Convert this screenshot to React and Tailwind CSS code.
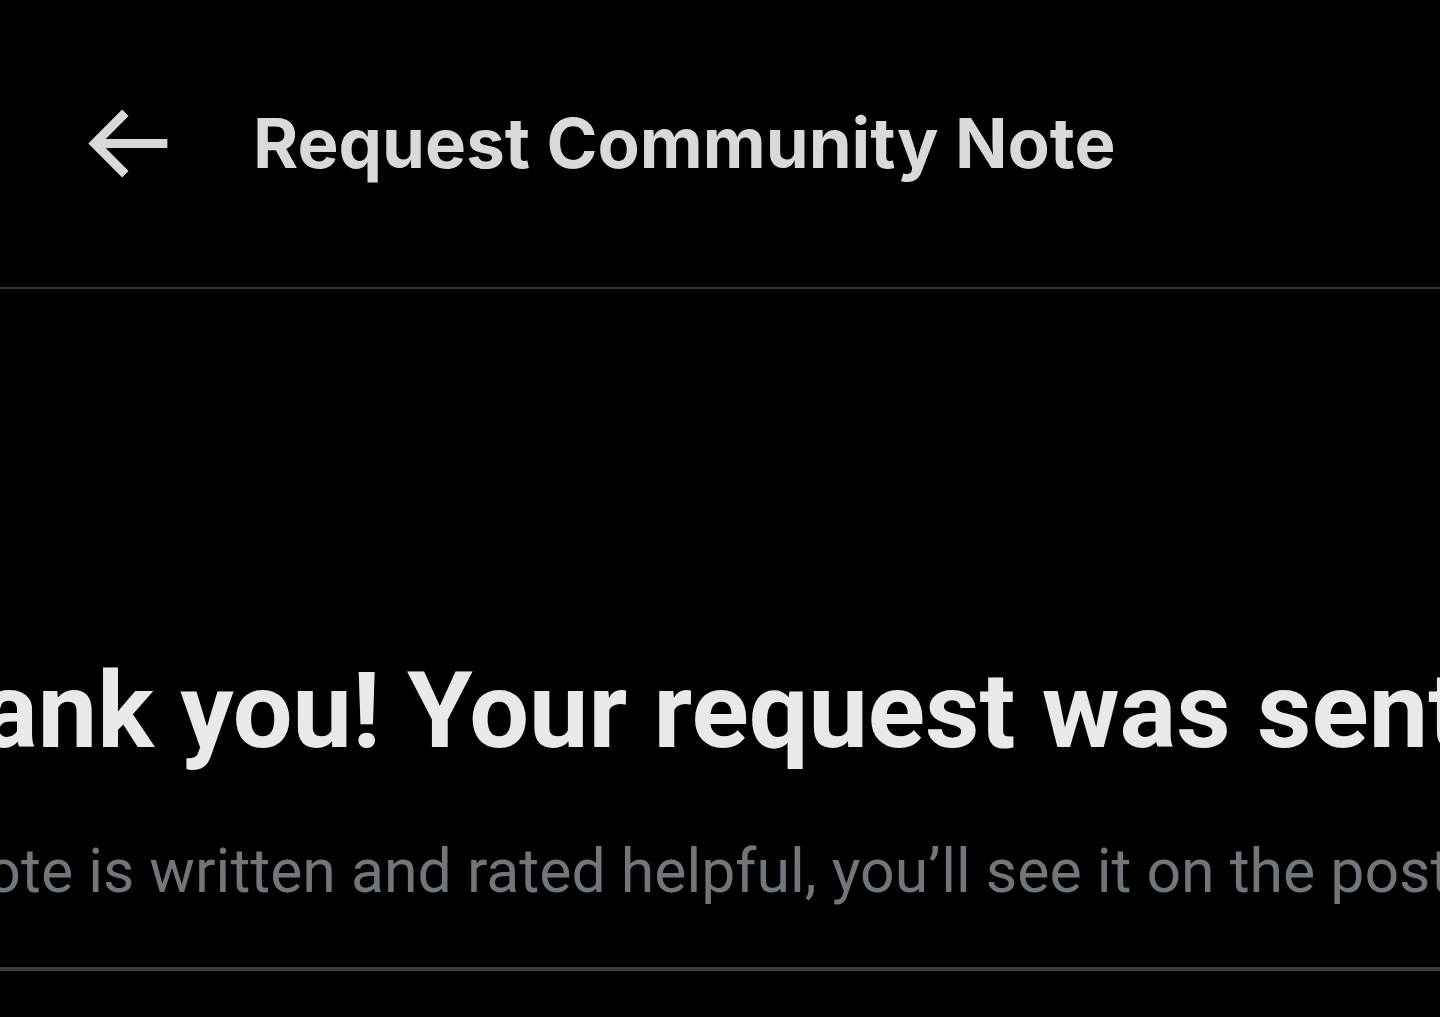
function BackArrow() {
  return (
    <svg viewBox="0 0 24 24" className="w-[109px] h-[109px] shrink-0 fill-[#d9d9d9]">
      <path d="M7.414 13l5.043 5.04-1.414 1.42L3.586 12l7.457-7.46 1.414 1.42L7.414 11H21v2H7.414z" />
    </svg>
  );
}

export default function App() {
  return (
    <div className="min-h-screen bg-black overflow-hidden font-['Roboto',sans-serif]">
      {/* Header */}
      <header className="h-[289px] flex items-center pl-[72px] border-b-2 border-[#2f3336]">
        <BackArrow />
        <h1 className="ml-[72px] text-[69px] leading-[1.2] font-bold text-[#d9d9d9] font-['Inter',sans-serif]">
          Request Community Note
        </h1>
      </header>

      {/* Confirmation */}
      <main className="pt-[359px]">
        <div className="border-b-4 border-[#3a3d40] pb-[58px]">
          <h2 className="whitespace-nowrap ml-[-144px] text-[106px] leading-[1.2] font-bold text-[#e7e9ea] w-max">
            Thank you! Your request was sent
          </h2>
          <p className="whitespace-nowrap ml-[-148px] mt-[61px] text-[60.75px] leading-[1.2] text-[#71767b] w-max">
            If a note is written and rated helpful, you’ll see it on the post.
          </p>
        </div>
      </main>
    </div>
  );
}
